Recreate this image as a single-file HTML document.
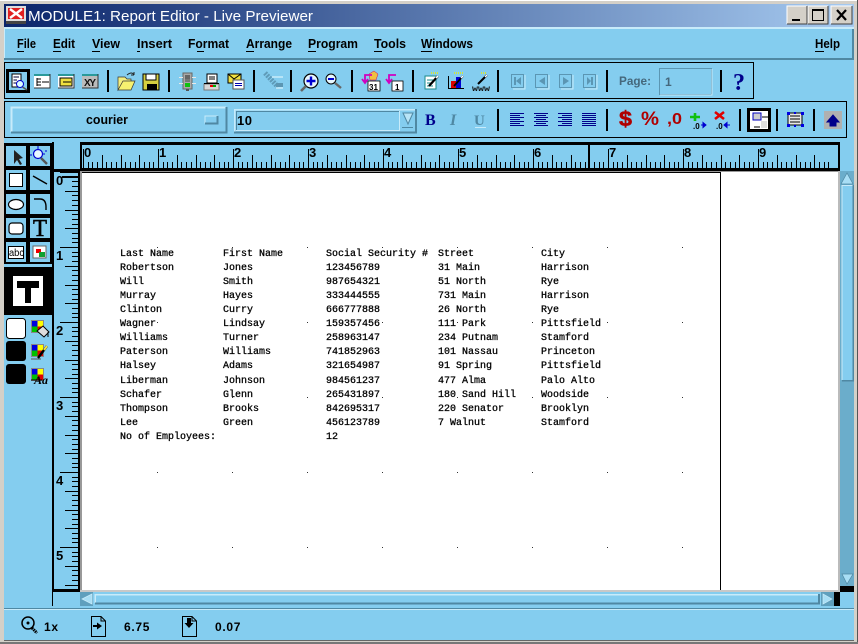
<!DOCTYPE html>
<html><head><meta charset="utf-8"><title>MODULE1: Report Editor - Live Previewer</title>
<style>
html,body{margin:0;padding:0;background:#84cdef;overflow:hidden}
svg{display:block;position:absolute;left:0;top:0}
.m{font:bold 13px "Liberation Sans",sans-serif;fill:#000}
.r{font:10px "Liberation Mono",monospace;fill:#000;stroke:#000;stroke-width:.28}
.l{font:bold 13px "Liberation Sans",sans-serif;fill:#000}
.s{font:bold 12px "Liberation Sans",sans-serif;fill:#000;letter-spacing:.7px}
</style></head><body>
<svg width="858" height="644" viewBox="0 0 858 644" xmlns="http://www.w3.org/2000/svg">
<defs>
<linearGradient id="tg" x1="0" x2="1" y1="0" y2="0"><stop offset="0" stop-color="#0a246a"/><stop offset="1" stop-color="#a6caf0"/></linearGradient>
<g id="ti"><path d="M.5 149V168M5.5 162V168M9.5 162V168M14.5 162V168M19.5 155V168M23.5 162V168M28.5 162V168M33.5 162V168M38.5 155V168M42.5 162V168M47.5 162V168M52.5 162V168M56.5 155V168M61.5 162V168M66.5 162V168M70.5 162V168" stroke="#000" fill="none"/></g>
<g id="li"><path d="M60 .5H79M72 5.5H79M72 9.5H79M72 14.5H79M65 19.5H79M72 23.5H79M72 28.5H79M72 33.5H79M65 38.5H79M72 42.5H79M72 47.5H79M72 52.5H79M65 56.5H79M72 61.5H79M72 66.5H79M72 70.5H79" stroke="#000" fill="none"/></g>
<g id="dr"><rect x="157" y="247" width="1" height="1"/><rect x="232" y="247" width="1" height="1"/><rect x="307" y="247" width="1" height="1"/><rect x="382" y="247" width="1" height="1"/><rect x="457" y="247" width="1" height="1"/><rect x="532" y="247" width="1" height="1"/><rect x="607" y="247" width="1" height="1"/><rect x="682" y="247" width="1" height="1"/></g>
<g id="cq"><rect x="0" y="0" width="13" height="13" fill="#888"/><rect x="1" y="1" width="5.5" height="5.5" fill="#0000e0"/><rect x="6.5" y="1" width="5.5" height="5.5" fill="#ff0"/><rect x="1" y="6.5" width="5.5" height="5.5" fill="#00c000"/><rect x="6.5" y="6.5" width="5.5" height="5.5" fill="#e00000"/></g>
<clipPath id="lc"><rect x="54" y="172" width="26" height="418"/></clipPath>
</defs>

<!-- window frame -->
<rect width="858" height="644" fill="#d4d0c8"/>
<rect x="0" y="0" width="858" height="1" fill="#fff"/>
<rect x="857" y="0" width="1" height="644" fill="#555"/>
<rect x="0" y="642" width="858" height="2" fill="#777"/>
<rect x="4" y="28" width="850" height="612" fill="#84cdef"/>

<!-- title bar -->
<rect x="4" y="4" width="850" height="23" fill="url(#tg)"/>
<rect x="4" y="27" width="850" height="2" fill="#c8ebfa"/>
<g shape-rendering="crispEdges">
<rect x="6" y="6" width="20" height="15" fill="#ddd"/><rect x="8" y="8" width="16" height="11" fill="#e02020"/><rect x="6" y="21" width="20" height="3" fill="#444"/>
</g>
<path d="M10 9L22 18M22 9L10 18" stroke="#fff" stroke-width="2.4"/>
<text x="28" y="21" font-family="Liberation Sans,sans-serif" font-size="15" fill="#fff" textLength="285" lengthAdjust="spacingAndGlyphs">MODULE1: Report Editor - Live Previewer</text>
<g shape-rendering="crispEdges">
<rect x="787" y="6" width="20" height="18" fill="#d4d0c8"/><path d="M787 24V6H807" stroke="#fff" fill="none"/><path d="M807 6V24H787" stroke="#404040" fill="none"/>
<rect x="792" y="19" width="8" height="2" fill="#000"/>
<rect x="808" y="6" width="20" height="18" fill="#d4d0c8"/><path d="M808 24V6H828" stroke="#fff" fill="none"/><path d="M828 6V24H808" stroke="#404040" fill="none"/>
<rect x="812.5" y="9.5" width="11" height="11" fill="none" stroke="#000"/><rect x="812" y="9" width="12" height="2" fill="#000"/>
<rect x="831" y="6" width="21" height="18" fill="#d4d0c8"/><path d="M831 24V6H852" stroke="#fff" fill="none"/><path d="M852 6V24H831" stroke="#404040" fill="none"/>
</g>
<path d="M837 10L846 20M846 10L837 20" stroke="#000" stroke-width="2.2"/>

<!-- menu bar -->
<g shape-rendering="crispEdges">
<rect x="4" y="29" width="1" height="30" fill="#c8ebfa"/>
<rect x="4" y="58" width="850" height="2" fill="#4f88a3"/>
<rect x="852" y="29" width="2" height="31" fill="#4f88a3"/>
</g>
<text class="m" x="17" y="48" textLength="19" lengthAdjust="spacingAndGlyphs">File</text>
<text class="m" x="53" y="48" textLength="22" lengthAdjust="spacingAndGlyphs">Edit</text>
<text class="m" x="92" y="48" textLength="28" lengthAdjust="spacingAndGlyphs">View</text>
<text class="m" x="137" y="48" textLength="35" lengthAdjust="spacingAndGlyphs">Insert</text>
<text class="m" x="188" y="48" textLength="41" lengthAdjust="spacingAndGlyphs">Format</text>
<text class="m" x="246" y="48" textLength="46" lengthAdjust="spacingAndGlyphs">Arrange</text>
<text class="m" x="308" y="48" textLength="50" lengthAdjust="spacingAndGlyphs">Program</text>
<text class="m" x="374" y="48" textLength="32" lengthAdjust="spacingAndGlyphs">Tools</text>
<text class="m" x="421" y="48" textLength="52" lengthAdjust="spacingAndGlyphs">Windows</text>
<text class="m" x="815" y="48" textLength="25" lengthAdjust="spacingAndGlyphs">Help</text>
<path d="M17 51.5H24M53 51.5H61M92 51.5H100M137 51.5H140M197 51.5H204M246 51.5H254M308 51.5H316M374 51.5H382M421 51.5H432M815 51.5H824" stroke="#000" shape-rendering="crispEdges"/>

<!-- toolbar boxes -->
<rect x="4.5" y="62.5" width="749" height="36" fill="none" stroke="#000" shape-rendering="crispEdges"/>
<rect x="4.5" y="101.5" width="842" height="36" fill="none" stroke="#000" shape-rendering="crispEdges"/>
<path d="M108 70V92M169 70V92M254 70V92M291 70V92M352 70V92M413 70V92M498 70V92M607 70V92M721 70V92" stroke="#000" stroke-width="2" shape-rendering="crispEdges"/>
<path d="M498 109V131M607 109V131M740 109V131M777 109V131M814 109V131" stroke="#000" stroke-width="2" shape-rendering="crispEdges"/>

<!-- button 1 -->
<g shape-rendering="crispEdges">
<rect x="7.5" y="70.5" width="21" height="21" fill="none" stroke="#000" stroke-width="3"/>
<rect x="12" y="74" width="9" height="13" fill="#fff" stroke="#000" stroke-width=".8"/>
<path d="M13.5 77H19M13.5 80H17M13.5 83H17" stroke="#003"/>
<rect x="82" y="74" width="16" height="14" fill="#bbb"/>
<rect x="34" y="74" width="16" height="14" fill="#fff"/><rect x="34" y="74" width="16" height="2" fill="#2a9a9a"/><path d="M34 88H50V74" stroke="#333" fill="none"/>
<path d="M37 79h4M37 82h4M37 85h4M37 78v8M42 82h7" stroke="#000"/>
<rect x="58" y="74" width="16" height="14" fill="#fff"/><rect x="58" y="74" width="16" height="2" fill="#2a9a9a"/><path d="M58 88H74V74" stroke="#333" fill="none"/>
<rect x="60" y="78" width="12" height="8" fill="#f0e040" stroke="#000" stroke-width=".7"/><path d="M63 82H71" stroke="#000"/>
<rect x="82" y="74" width="16" height="2" fill="#2a9a9a"/><path d="M82 88H98V74" stroke="#333" fill="none"/>
</g>
<circle cx="20" cy="84" r="3.5" fill="#dff" stroke="#00c"/>
<path d="M22.5 87L27 90" stroke="#555" stroke-width="1.6"/>
<text x="84" y="86" font-family="Liberation Sans,sans-serif" font-weight="bold" font-size="10" fill="#111" textLength="12">XY</text>

<!-- open folder -->
<path d="M118 90V77H125L127 79H131V82H123Z" fill="#f2ee80" stroke="#333" stroke-width=".7"/>
<path d="M118 90L123 81H135L131 90Z" fill="#f6f270" stroke="#333" stroke-width=".7"/>
<path d="M127 75Q132 71 134 75M134 75L131 75M134 75L134 72" fill="none" stroke="#222"/>
<g shape-rendering="crispEdges">
<!-- save -->
<rect x="143" y="74" width="16" height="16" fill="#d6d040" stroke="#000"/><rect x="146" y="74" width="10" height="6" fill="#fff" stroke="#000" stroke-width=".6"/><rect x="147" y="84" width="10" height="6" fill="#000"/>
<!-- traffic light -->
<rect x="183" y="73" width="9" height="16" fill="#aaa" stroke="#666"/><rect x="179" y="77" width="4" height="1" fill="#e8e8e8"/><rect x="192" y="77" width="4" height="1" fill="#e8e8e8"/><rect x="179" y="83" width="4" height="1" fill="#e8e8e8"/><rect x="192" y="83" width="4" height="1" fill="#e8e8e8"/><rect x="185" y="75" width="5" height="4" fill="#666"/><rect x="185" y="79" width="5" height="3" fill="#777"/><rect x="185" y="83" width="5" height="4" fill="#10c010"/><rect x="186" y="89" width="3" height="2" fill="#555"/>
<!-- printer -->
<rect x="207" y="74" width="10" height="9" fill="#fff" stroke="#000"/><path d="M209 77H215M209 79H215" stroke="#000"/><rect x="204" y="84" width="15" height="6" fill="#d8d8d8" stroke="#777"/><rect x="210" y="85" width="3" height="2" fill="#e00"/><rect x="213" y="85" width="3" height="2" fill="#0a0"/><rect x="204" y="83" width="15" height="1" fill="#000"/>
<!-- mail -->
<rect x="228" y="74" width="13" height="9" fill="#f0e040" stroke="#000"/><rect x="233" y="80" width="11" height="9" fill="#fff" stroke="#555"/><path d="M235 83.5H242M235 85.5H242" stroke="#0000b0"/>
</g>
<path d="M228 74L234 79L241 74" fill="none" stroke="#000"/>
<!-- disabled tool -->
<path d="M265 73L278 87" stroke="#5b96b3" stroke-width="5" stroke-dasharray="2 1" opacity=".9"/>
<path d="M272 77H283M276 88H283" stroke="#c8ebfa" stroke-width="1.5"/><rect x="276" y="83" width="7" height="4" fill="#5b96b3"/>
<!-- zoom+ -->
<circle cx="311" cy="81" r="7" fill="#e8f8ff" stroke="#000" stroke-width="1.2"/><path d="M311 76.5V85.5M306.5 81H315.5" stroke="#0000d0" stroke-width="2.4"/><path d="M306 86L301 91" stroke="#666" stroke-width="2.6"/>
<!-- zoom- -->
<circle cx="331" cy="79" r="5" fill="#e8f8ff" stroke="#000"/><path d="M328 79H334" stroke="#0000d0" stroke-width="2"/><path d="M335 83L341 88" stroke="#666" stroke-width="2.4"/>
<!-- calendar arrow -->
<rect x="368" y="81" width="12" height="10" fill="#fff" stroke="#000" stroke-width=".8"/>
<text x="369" y="90" font-family="Liberation Sans,sans-serif" font-size="8" font-weight="bold" fill="#000">31</text>
<path d="M369 74l5-3l4 3l-2 6h-6z" fill="#f0c040" stroke="#c06" stroke-width=".5"/>
<path d="M372 75H365V82M362 79L365 83L368 79" fill="none" stroke="#d000c0" stroke-width="1.8"/>
<rect x="392" y="81" width="11" height="10" fill="#fff" stroke="#000" stroke-width=".8"/>
<text x="395" y="90" font-family="Liberation Sans,sans-serif" font-size="8" font-weight="bold" fill="#000">1</text>
<path d="M396 75H389V82M386 79L389 83L392 79" fill="none" stroke="#d000c0" stroke-width="1.8"/>
<!-- edit wand -->
<rect x="425" y="76" width="11" height="13" fill="#fff" stroke="#1a8a8a"/><path d="M427 80H433M427 83H433M427 86H433" stroke="#1a8a8a"/>
<path d="M429 86L438 76" stroke="#000" stroke-width="2.2"/><path d="M436 78L438 76" stroke="#fff" stroke-width="1.6"/>
<!-- chart -->
<path d="M448.5 76V88.5H464" stroke="#000" fill="none"/><rect x="451" y="81" width="5" height="7" fill="#d00"/><rect x="456" y="77" width="5" height="11" fill="#0000d0"/>
<path d="M454 86L463 76" stroke="#000" stroke-width="1.8"/><path d="M461 78L463 76" stroke="#fff" stroke-width="1.4"/>
<!-- www -->
<path d="M478 84L487 75" stroke="#000" stroke-width="2"/><path d="M485 77L487 75" stroke="#fff" stroke-width="1.4"/>
<path d="M481 73H486" stroke="#ee0" stroke-width="1.4" stroke-dasharray="1 1"/>
<text x="472" y="91" font-family="Liberation Mono,monospace" font-size="8" font-weight="bold" fill="#111" textLength="18" lengthAdjust="spacingAndGlyphs">www</text>
<path d="M431 73H438M454 73H463" stroke="#ee0" stroke-width="1.4" stroke-dasharray="1 1"/>
<!-- nav -->
<g shape-rendering="crispEdges">
<rect x="511.5" y="74.5" width="12" height="13" fill="#84cdef" stroke="#5b96b3" stroke-width="1.4"/><path d="M513 89H525V75" stroke="#c8ebfa" fill="none"/>
<rect x="535.5" y="74.5" width="12" height="13" fill="#84cdef" stroke="#5b96b3" stroke-width="1.4"/><path d="M537 89H549V75" stroke="#c8ebfa" fill="none"/>
<rect x="559.5" y="74.5" width="12" height="13" fill="#84cdef" stroke="#5b96b3" stroke-width="1.4"/><path d="M561 89H573V75" stroke="#c8ebfa" fill="none"/>
<rect x="583.5" y="74.5" width="12" height="13" fill="#84cdef" stroke="#5b96b3" stroke-width="1.4"/><path d="M585 89H597V75" stroke="#c8ebfa" fill="none"/>
<rect x="514" y="77" width="2" height="8" fill="#5b96b3"/><rect x="591" y="77" width="2" height="8" fill="#5b96b3"/>
</g>
<path d="M521 77V85L516 81ZM545 77V85L539 81ZM563 77V85L569 81ZM587 77V85L591 81Z" fill="#5b96b3"/>
<text x="619" y="85" font-family="Liberation Sans,sans-serif" font-weight="bold" font-size="12" fill="#45687c" textLength="32" lengthAdjust="spacingAndGlyphs">Page:</text>
<rect x="659.5" y="68.5" width="52" height="26" fill="#84cdef" stroke="#5b96b3" shape-rendering="crispEdges"/>
<path d="M660 95H712V69" stroke="#c8ebfa" fill="none" shape-rendering="crispEdges"/>
<text x="665" y="86" font-family="Liberation Sans,sans-serif" font-weight="bold" font-size="12" fill="#45687c">1</text>
<text x="733" y="90" font-family="Liberation Serif,serif" font-weight="bold" font-size="24" fill="#00008b">?</text>

<!-- font combos -->
<g shape-rendering="crispEdges">
<path d="M11.5 132V107.5H226" fill="none" stroke="#c8ebfa" stroke-width="2"/>
<path d="M226.5 107V132.5H11" fill="none" stroke="#4f88a3" stroke-width="2"/>
<rect x="205" y="116" width="12" height="7" fill="#84cdef" stroke="#c8ebfa"/><path d="M205 123.5H217.5V116" stroke="#4f88a3" fill="none" stroke-width="2"/>
<path d="M234.5 132V109.5H416" fill="none" stroke="#c8ebfa" stroke-width="1.5"/>
<path d="M416 109V132.5H234" fill="none" stroke="#4f88a3" stroke-width="2"/>
<path d="M236.5 130V111.5H399" fill="none" stroke="#4f88a3"/>
<path d="M399.5 111V130.5H236" fill="none" stroke="#c8ebfa"/>
<path d="M402 127.5H413" stroke="#4f88a3"/>
</g>
<path d="M403 113H413L408 124Z" fill="#b8e4f6" stroke="#4f88a3" stroke-width="1"/>
<text x="86" y="124" font-family="Liberation Sans,sans-serif" font-weight="bold" font-size="12.5" fill="#000" textLength="42" lengthAdjust="spacingAndGlyphs">courier</text>
<text x="237" y="125" font-family="Liberation Sans,sans-serif" font-weight="bold" font-size="13" fill="#000" textLength="15">10</text>

<!-- format row -->
<text x="425" y="125" font-family="Liberation Serif,serif" font-weight="bold" font-size="16" fill="#00008b">B</text>
<text x="450" y="125" font-family="Liberation Serif,serif" font-weight="bold" font-style="italic" font-size="16" fill="#4f88a3">I</text>
<text x="474" y="125" font-family="Liberation Serif,serif" font-weight="bold" font-size="15" fill="#4f88a3">U</text>
<path d="M475 127.5H486" stroke="#c8ebfa"/>
<g shape-rendering="crispEdges" stroke="#00008b" fill="none">
<path d="M510 113.5H524M510 115.5H520M510 117.5H524M510 119.5H520M510 121.5H524M510 123.5H520M510 125.5H524"/>
<path d="M534 113.5H548M536 115.5H546M534 117.5H548M536 119.5H546M534 121.5H548M536 123.5H546M534 125.5H548"/>
<path d="M558 113.5H572M562 115.5H572M558 117.5H572M562 119.5H572M558 121.5H572M562 123.5H572M558 125.5H572"/>
<path d="M582 113.5H596M582 115.5H596M582 117.5H596M582 119.5H596M582 121.5H596M582 123.5H596M582 125.5H596"/>
</g>
<text x="619" y="126" font-family="Liberation Sans,sans-serif" font-weight="bold" font-size="21" fill="#b00000" stroke="#b00000" stroke-width=".5" textLength="13" lengthAdjust="spacingAndGlyphs">$</text>
<text x="641" y="125" font-family="Liberation Sans,sans-serif" font-weight="bold" font-size="19" fill="#b00000" textLength="18" lengthAdjust="spacingAndGlyphs">%</text>
<text x="667" y="124" font-family="Liberation Sans,sans-serif" font-weight="bold" font-size="16" fill="#b00000" textLength="15" lengthAdjust="spacingAndGlyphs">,0</text>
<path d="M695 113V121M690 117H700" stroke="#10c010" stroke-width="2.6"/>
<text x="693" y="129" font-family="Liberation Sans,sans-serif" font-weight="bold" font-size="8" fill="#000">.0</text>
<path d="M701 125H705M703 122.5L706 125L703 127.5Z" stroke="#0000d0" fill="#0000d0"/>
<path d="M715 112L724 119M724 112L715 119" stroke="#e00000" stroke-width="2.6"/>
<text x="716" y="129" font-family="Liberation Sans,sans-serif" font-weight="bold" font-size="8" fill="#000">.0</text>
<path d="M730 125H725M727 122.5L724 125L727 127.5Z" stroke="#0000d0" fill="#0000d0"/>
<g shape-rendering="crispEdges">
<rect x="748.5" y="109.5" width="21" height="21" fill="#fff" stroke="#000" stroke-width="3"/>
<rect x="753" y="113" width="8" height="7" fill="#ccc" stroke="#0000c0"/><path d="M762 117H768M754 127H760" stroke="#000"/>
<rect x="761" y="121" width="6" height="7" fill="#ddd"/>
<rect x="788" y="113" width="14" height="12" fill="#e8e8e8" stroke="#000" stroke-width=".7"/><path d="M790 116H800M790 119H800M790 122H800" stroke="#000"/>
<path d="M787 112h3v3h-3zM794 112h2v2h-2zM801 112h3v3h-3zM787 124h3v3h-3zM794 125h2v2h-2zM801 124h3v3h-3z" fill="#0000e0"/>
<rect x="824" y="111" width="18" height="18" fill="#b0b0b0"/>
</g>
<path d="M827 122L833 115L839 122Z M830 122H836V126H830Z" fill="#00008b" stroke="#00008b"/>

<!-- tool palette -->
<g shape-rendering="crispEdges">
<rect x="4" y="143" width="48" height="119" fill="#000"/>
<rect x="6" y="146" width="20" height="20" fill="#84cdef"/><rect x="30" y="146" width="20" height="20" fill="#84cdef"/>
<rect x="6" y="170" width="20" height="20" fill="#84cdef"/><rect x="30" y="170" width="20" height="20" fill="#84cdef"/>
<rect x="6" y="194" width="20" height="20" fill="#84cdef"/><rect x="30" y="194" width="20" height="20" fill="#84cdef"/>
<rect x="6" y="218" width="20" height="20" fill="#84cdef"/><rect x="30" y="218" width="20" height="20" fill="#84cdef"/>
<rect x="6" y="242" width="20" height="20" fill="#84cdef"/><rect x="30" y="242" width="20" height="20" fill="#84cdef"/>
<rect x="4" y="262" width="48" height="2" fill="#000"/>
<rect x="4" y="267" width="48" height="48" fill="#000"/>
<rect x="13" y="276" width="30" height="30" fill="#fff"/>
<rect x="17" y="281" width="22" height="7" fill="#000"/><rect x="25" y="281" width="6" height="22" fill="#000"/>
<rect x="9.5" y="173.5" width="13" height="13" fill="#fff" stroke="#000"/>
</g>
<path d="M14 150L14 164L17 160L20 165L22 164L19 159L23 158Z" fill="#222"/>
<circle cx="38" cy="154" r="4.5" fill="#e8f8ff" stroke="#0000d0" stroke-width="1.2"/><path d="M41 158L47 164" stroke="#555" stroke-width="2.4"/><path d="M38 146V149M32 155H30M45 151H47M45 154H43" stroke="#0000d0"/>
<path d="M33 176L47 184" stroke="#000" stroke-width="1.4"/>
<ellipse cx="16" cy="204.500" rx="7.500" ry="5" fill="#fff" stroke="#000" stroke-width="1.2"/>
<path d="M34 199H40Q46 199 46 207V210" fill="none" stroke="#000" stroke-width="1.4"/>
<rect x="9" y="223" width="14" height="11" rx="3" fill="#fff" stroke="#000" stroke-width="1.2"/>
<text x="33" y="236" font-family="Liberation Serif,serif" font-size="24" fill="#000" stroke="#000" stroke-width=".6" textLength="14" lengthAdjust="spacingAndGlyphs">T</text>
<rect x="8.500" y="246.500" width="15" height="12" fill="#fff" stroke="#000"/>
<text x="9" y="256" font-family="Liberation Sans,sans-serif" font-size="10" fill="#000" textLength="15" lengthAdjust="spacingAndGlyphs">abc</text>
<g shape-rendering="crispEdges">
<rect x="33" y="246" width="13" height="12" fill="#fff" stroke="#666"/><rect x="36" y="249" width="5" height="4" fill="#e00"/><rect x="39" y="252" width="6" height="5" fill="#10a030"/>
</g>
<rect x="6.500" y="318.500" width="19" height="20" rx="3" fill="#fff" stroke="#000"/>
<rect x="6" y="341" width="20" height="20" rx="3" fill="#000"/>
<rect x="6" y="364" width="20" height="20" rx="3" fill="#000"/>
<use href="#cq" x="31" y="320" shape-rendering="crispEdges"/>
<use href="#cq" x="31" y="344" shape-rendering="crispEdges"/>
<use href="#cq" x="31" y="368" shape-rendering="crispEdges"/>
<path d="M37 331L43 326L49 332L44 337Z" fill="#ddd" stroke="#000"/><path d="M48 332V337" stroke="#000"/>
<path d="M38 358L47 346" stroke="#000" stroke-width="2.4"/><path d="M44 350L47 346" stroke="#f0e040" stroke-width="2"/><path d="M31 359H41" stroke="#555"/>
<text x="34" y="384" font-family="Liberation Serif,serif" font-weight="bold" font-style="italic" font-size="12" fill="#000" textLength="14" lengthAdjust="spacingAndGlyphs">Aa</text>
<path d="M31 380H42" stroke="#000"/>

<!-- rulers -->
<g shape-rendering="crispEdges">
<rect x="52" y="142" width="29" height="29" fill="#84cdef"/>
<rect x="52" y="142" width="2" height="450" fill="#000"/>
<rect x="52" y="590" width="1" height="16" fill="#000"/>
<rect x="52" y="169" width="29" height="3" fill="#000"/>
<rect x="81" y="142" width="757" height="3" fill="#000"/>
<rect x="81" y="168" width="757" height="3" fill="#000"/>
<rect x="80" y="142" width="2" height="29" fill="#000"/>
<rect x="838" y="142" width="2" height="29" fill="#000"/>
<use href="#ti" x="83"/><use href="#ti" x="158"/><use href="#ti" x="233"/><use href="#ti" x="308"/><use href="#ti" x="383"/><use href="#ti" x="458"/><use href="#ti" x="533"/><use href="#ti" x="608"/><use href="#ti" x="683"/><use href="#ti" x="758"/>
<rect x="588" y="145" width="2" height="24" fill="#000"/>
<g clip-path="url(#lc)">
<use href="#li" y="172"/><use href="#li" y="247"/><use href="#li" y="322"/><use href="#li" y="397"/><use href="#li" y="472"/><use href="#li" y="547"/>
</g>
<rect x="62" y="176" width="18" height="2" fill="#000"/>
<rect x="78" y="172" width="2" height="419" fill="#000"/>
<rect x="52" y="589" width="28" height="3" fill="#000"/>
<!-- page area -->
<rect x="80" y="171" width="760" height="421" fill="#999"/>
<rect x="82" y="172" width="756" height="418" fill="#fff"/>
<rect x="838" y="171" width="2" height="421" fill="#bbb"/>
<rect x="80" y="590" width="760" height="2" fill="#c8c8c8"/>
<rect x="82" y="172" width="639" height="1" fill="#000"/>
<rect x="720" y="172" width="1" height="418" fill="#000"/>
</g>
<text class="l" x="84" y="157">0</text><text class="l" x="159" y="157">1</text><text class="l" x="234" y="157">2</text><text class="l" x="309" y="157">3</text><text class="l" x="384" y="157">4</text><text class="l" x="459" y="157">5</text><text class="l" x="534" y="157">6</text><text class="l" x="609" y="157">7</text><text class="l" x="684" y="157">8</text><text class="l" x="759" y="157">9</text>
<text class="l" x="56" y="185">0</text><text class="l" x="56" y="260">1</text><text class="l" x="56" y="335">2</text><text class="l" x="56" y="410">3</text><text class="l" x="56" y="485">4</text><text class="l" x="56" y="560">5</text>

<!-- dots -->
<g fill="#333" shape-rendering="crispEdges">
<use href="#dr"/><use href="#dr" y="75"/><use href="#dr" y="150"/><use href="#dr" y="225"/><use href="#dr" y="300"/>
</g>

<!-- report text -->
<text class="r" x="120" y="256">Last Name</text><text class="r" x="223" y="256">First Name</text><text class="r" x="326" y="256">Social Security #</text><text class="r" x="438" y="256">Street</text><text class="r" x="541" y="256">City</text>
<text class="r" x="120" y="270">Robertson</text><text class="r" x="223" y="270">Jones</text><text class="r" x="326" y="270">123456789</text><text class="r" x="438" y="270">31 Main</text><text class="r" x="541" y="270">Harrison</text>
<text class="r" x="120" y="284">Will</text><text class="r" x="223" y="284">Smith</text><text class="r" x="326" y="284">987654321</text><text class="r" x="438" y="284">51 North</text><text class="r" x="541" y="284">Rye</text>
<text class="r" x="120" y="298">Murray</text><text class="r" x="223" y="298">Hayes</text><text class="r" x="326" y="298">333444555</text><text class="r" x="438" y="298">731 Main</text><text class="r" x="541" y="298">Harrison</text>
<text class="r" x="120" y="312">Clinton</text><text class="r" x="223" y="312">Curry</text><text class="r" x="326" y="312">666777888</text><text class="r" x="438" y="312">26 North</text><text class="r" x="541" y="312">Rye</text>
<text class="r" x="120" y="326">Wagner</text><text class="r" x="223" y="326">Lindsay</text><text class="r" x="326" y="326">159357456</text><text class="r" x="438" y="326">111 Park</text><text class="r" x="541" y="326">Pittsfield</text>
<text class="r" x="120" y="340">Williams</text><text class="r" x="223" y="340">Turner</text><text class="r" x="326" y="340">258963147</text><text class="r" x="438" y="340">234 Putnam</text><text class="r" x="541" y="340">Stamford</text>
<text class="r" x="120" y="354">Paterson</text><text class="r" x="223" y="354">Williams</text><text class="r" x="326" y="354">741852963</text><text class="r" x="438" y="354">101 Nassau</text><text class="r" x="541" y="354">Princeton</text>
<text class="r" x="120" y="368">Halsey</text><text class="r" x="223" y="368">Adams</text><text class="r" x="326" y="368">321654987</text><text class="r" x="438" y="368">91 Spring</text><text class="r" x="541" y="368">Pittsfield</text>
<text class="r" x="120" y="383">Liberman</text><text class="r" x="223" y="383">Johnson</text><text class="r" x="326" y="383">984561237</text><text class="r" x="438" y="383">477 Alma</text><text class="r" x="541" y="383">Palo Alto</text>
<text class="r" x="120" y="397">Schafer</text><text class="r" x="223" y="397">Glenn</text><text class="r" x="326" y="397">265431897</text><text class="r" x="438" y="397">180 Sand Hill</text><text class="r" x="541" y="397">Woodside</text>
<text class="r" x="120" y="411">Thompson</text><text class="r" x="223" y="411">Brooks</text><text class="r" x="326" y="411">842695317</text><text class="r" x="438" y="411">220 Senator</text><text class="r" x="541" y="411">Brooklyn</text>
<text class="r" x="120" y="425">Lee</text><text class="r" x="223" y="425">Green</text><text class="r" x="326" y="425">456123789</text><text class="r" x="438" y="425">7 Walnut</text><text class="r" x="541" y="425">Stamford</text>
<text class="r" x="120" y="439">No of Employees:</text><text class="r" x="326" y="439">12</text>

<!-- scrollbars -->
<g shape-rendering="crispEdges">
<rect x="840" y="171" width="14" height="415" fill="#6badcb"/>
<rect x="842" y="185" width="11" height="195" fill="#84cdef"/>
<path d="M842 380V185.500H853" stroke="#c8ebfa" fill="none"/><path d="M853 185V380.500H842" stroke="#4f88a3" fill="none" stroke-width="1.500"/>
<rect x="840" y="586" width="14" height="6" fill="#000"/>
<rect x="80" y="592" width="754" height="14" fill="#84cdef"/>
<rect x="80" y="592" width="13" height="14" fill="#5f9fbd"/>
<rect x="821" y="592" width="13" height="14" fill="#5f9fbd"/>
<path d="M95 603V594.500H818" stroke="#c8ebfa" fill="none" stroke-width="1.500"/>
<path d="M819 594V603.500H95" stroke="#4f88a3" fill="none" stroke-width="2"/>
<rect x="834" y="592" width="6" height="14" fill="#000"/>
<rect x="4" y="608" width="850" height="1" fill="#4f88a3"/>
<rect x="4" y="609" width="850" height="1" fill="#c8ebfa"/>
<rect x="4" y="640" width="850" height="1" fill="#666"/>
</g>
<path d="M847 173L841 184H853Z" fill="#a8def5" stroke="#4f88a3" stroke-width=".7"/>
<path d="M847 584L842 574H853Z" fill="#a8def5" stroke="#4f88a3" stroke-width=".7"/>
<path d="M82 599L92 594V604Z" fill="#a8def5" stroke="#c8ebfa" stroke-width=".7"/>
<path d="M832 599L823 594V604Z" fill="#a8def5" stroke="#c8ebfa" stroke-width=".7"/>

<!-- status bar -->
<circle cx="28" cy="623" r="6" fill="none" stroke="#000" stroke-width="1.500"/><circle cx="28" cy="623" r="1.500" fill="#000"/>
<path d="M32 628L37 633" stroke="#000" stroke-width="3" stroke-dasharray="1.500 .7"/>
<text class="s" x="44" y="631">1x</text>
<path d="M91.500 616.500H101L105.500 621V636.500H91.500Z" fill="none" stroke="#000"/><path d="M101 617V621H105" fill="none" stroke="#000"/>
<path d="M93 625H97V622.500L102 626L97 629.500V627H93Z" fill="#000"/>
<text class="s" x="124" y="631">6.75</text>
<path d="M182.500 616.500H192L196.500 621V636.500H182.500Z" fill="none" stroke="#000"/><path d="M192 617V621H196" fill="none" stroke="#000"/>
<path d="M187 618H191V623H193.500L189 628L184.500 623H187Z" fill="#000"/>
<text class="s" x="215" y="631">0.07</text>
</svg>
</body></html>
